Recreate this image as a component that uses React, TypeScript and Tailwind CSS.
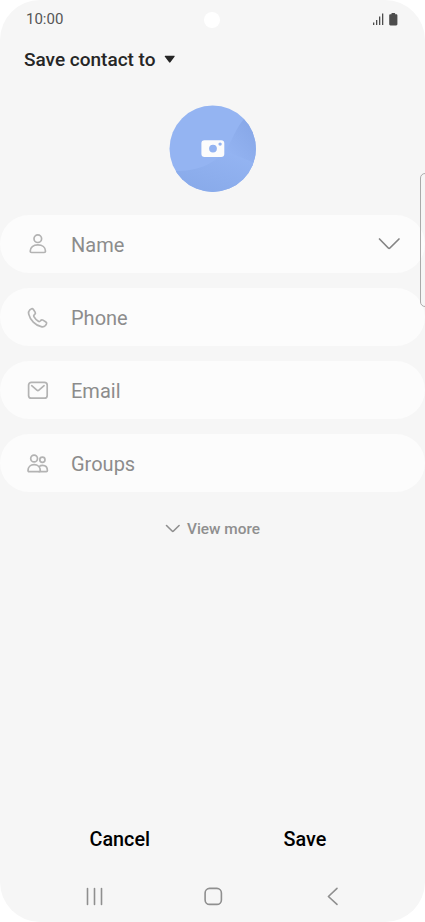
import type { ReactNode } from "react";

const stroke = { fill: "none", stroke: "#b3b3b3", strokeWidth: 1.7, strokeLinecap: "round", strokeLinejoin: "round" } as const;

function PersonIcon() {
  return (
    <svg className="mt-px" width="24" height="24" viewBox="0 0 24 24" {...stroke}>
      <circle cx="11.8" cy="6.7" r="3.8" />
      <path d="M4.200 19.200c0-3.900 3.100-6.300 7.600-6.300s7.700 2.400 7.700 6.300c0 .9-.5 1.300-1.400 1.300H5.600c-.9 0-1.400-.4-1.400-1.300z" />
    </svg>
  );
}

function PhoneIcon() {
  return (
    <svg className="mt-[2px]" width="24" height="24" viewBox="0 0 24 24" {...stroke}>
      <path d="M3.700 4 5 3.100c.9-.6 1.800-.4 2.400.4l1.700 2.600c.5.800.4 1.600-.3 2.200l-.6.500c-.6.600-.7 1.200-.3 1.900 1.100 2 2.500 3.400 4.500 4.600.7.400 1.300.3 1.900-.3l.5-.6c.6-.7 1.400-.8 2.200-.3l2.900 1.900c.8.600 1 1.400.4 2.300l-.9 1.200c-1.100 1.300-2.500 1.600-4.200 1.200C9.300 19.300 4.200 14.100 2.700 8.100c-.4-1.600-.1-3 1-4.100z" />
    </svg>
  );
}

function MailIcon() {
  return (
    <svg width="24" height="24" viewBox="0 0 24 24" {...stroke}>
      <rect x="2.600" y="4.300" width="18.600" height="15.900" rx="2.800" />
      <path d="m5.700 7.700 5.200 4.500c.7.600 1.300.6 2 0l5.200-4.500" />
    </svg>
  );
}

function GroupIcon() {
  return (
    <svg className="mt-[2px]" width="24" height="24" viewBox="0 0 24 24" {...stroke}>
      <circle cx="8.100" cy="6.500" r="3.400" />
      <circle cx="16.400" cy="7.700" r="2.600" />
      <path d="M2 18.600c0-3.600 2.500-5.900 6.100-5.900s6.200 2.300 6.200 5.900c0 .7-.4 1.100-1.100 1.100H3.100c-.7 0-1.100-.4-1.100-1.100z" />
      <path d="M13.300 14.500c.8-.8 1.900-1.200 3.300-1.200 2.900 0 4.800 1.900 4.800 5.200 0 .8-.4 1.200-1.100 1.200h-7" />
    </svg>
  );
}

function Field({ icon, label, children }: { icon: ReactNode; label: string; children?: ReactNode }) {
  return (
    <div className="flex h-[57.500px] items-center rounded-[29px] bg-[#fcfcfc] pr-[24px] pl-[26px]">
      {icon}
      <span className="ml-[21px] flex-1 pt-[2px] text-[20px] leading-6 text-[#8c8c8c]">{label}</span>
      {children}
    </div>
  );
}

export default function App() {
  return (
    <div className="h-[922px] w-[425px] overflow-hidden bg-white font-['Roboto',sans-serif]">
      <div className="relative flex h-full flex-col overflow-hidden rounded-[40px] bg-[#f6f6f6]">
        <header className="flex h-[38px] shrink-0 items-center justify-between pr-[26px] pl-[26px]">
          <span className="text-[15px] leading-5 text-[#555555]">10:00</span>
          <svg width="27" height="14" viewBox="0 0 27 14" fill="#4d4d4d">
            <path d="M1 10.500h1.300V13H1zM4 8h1.300v5H4zM7 4.500h1.300V13H7zM10 1.500h1.300V13H10z" />
            <path d="M19.400 1.700c0-.4.300-.6.600-.6h2.600c.4 0 .6.200.6.600v.5h.9c.9 0 1.300.5 1.300 1.300v8.600c0 .8-.4 1.300-1.300 1.300h-5.600c-.9 0-1.300-.5-1.300-1.300V3.500c0-.8.4-1.300 1.300-1.300h.9z" />
          </svg>
        </header>
        <div className="absolute top-[12px] left-[204px] size-4 rounded-full bg-white" />

        <div className="mt-px flex h-[42px] shrink-0 items-center pl-[24px]">
          <span className="text-[19px] leading-6 font-medium text-[#262626]">Save contact to</span>
          <svg className="ml-[8px]" width="12" height="10" viewBox="0 0 12 10" fill="#262626">
            <path d="M1.500.700h8.400c.8 0 1 .6.600 1.100L6.400 7.300c-.4.500-.9.500-1.300 0L.9 1.800C.5 1.300.8.700 1.500.700z" />
          </svg>
        </div>

        <div className="mt-[24px] flex shrink-0 justify-center">
          <svg width="88" height="88" viewBox="0 0 88 88">
            <defs>
              <clipPath id="avatar"><circle cx="43.700" cy="43.700" r="43.200" /></clipPath>
              <linearGradient id="right" x1="1" y1="0" x2=".3" y2="1">
                <stop offset="0" stopColor="#83a3e4" />
                <stop offset="1" stopColor="#94b4f2" />
              </linearGradient>
              <linearGradient id="bottom" x1="0" y1="1" x2=".7" y2="0">
                <stop offset="0" stopColor="#86a8e8" />
                <stop offset="1" stopColor="#94b4f2" />
              </linearGradient>
            </defs>
            <g clipPath="url(#avatar)">
              <rect width="88" height="88" fill="#94b4f2" />
              <path d="M0 66c24 1 43-4 56-21l32 12v31H0z" fill="url(#bottom)" />
              <path d="M88 4C71 13 67 27 60 40l-4 6 32 13z" fill="url(#right)" />
            </g>
            <path fillRule="evenodd" clipRule="evenodd" fill="#fcfcfc" d="M35.500 35.200h16.700c2 0 3.100 1.100 3.100 3v10.700c0 2-1.100 3-3.100 3H35.500c-2 0-3.100-1-3.100-3V38.200c0-1.900 1.100-3 3.100-3zM44 39.700a3.900 3.900 0 1 0 0 7.800 3.900 3.900 0 0 0 0-7.800zm7.100-2.300a1.700 1.700 0 1 0 0 3.400 1.700 1.700 0 0 0 0-3.400z" />
          </svg>
        </div>

        <main className="mt-[22px] flex shrink-0 flex-col gap-[15.500px]">
          <Field icon={<PersonIcon />} label="Name">
            <svg width="24" height="14" viewBox="0 0 24 14" fill="none" stroke="#858585" strokeWidth="1.700" strokeLinecap="round" strokeLinejoin="round">
              <path d="m2.500 2 8.800 9c.6.600 1 .600 1.600 0L22 2" />
            </svg>
          </Field>
          <Field icon={<PhoneIcon />} label="Phone" />
          <Field icon={<MailIcon />} label="Email" />
          <Field icon={<GroupIcon />} label="Groups" />
        </main>

        <div className="mt-[25px] flex items-center justify-center">
          <svg className="mr-[6px]" width="16" height="10" viewBox="0 0 16 10" fill="none" stroke="#8f8f8f" strokeWidth="1.600" strokeLinecap="round" strokeLinejoin="round">
            <path d="m1.500 1.500 5.600 5.500c.5.500.9.5 1.400 0l5.600-5.500" />
          </svg>
          <span className="text-[15.400px] leading-6 font-medium text-[#8f8f8f]">View more</span>
        </div>

        <footer className="mt-auto shrink-0">
          <div className="flex h-[30px] items-center pt-[2px] text-[19.800px] leading-6 font-medium text-black">
            <span className="ml-[89.500px] w-[194px]">Cancel</span>
            <span>Save</span>
          </div>
          <nav className="mt-[32px] flex h-[20px] items-center justify-between pr-[85px] pl-[85px]">
            <svg width="20" height="20" viewBox="0 0 20 20" fill="none" stroke="#8f8f8f" strokeWidth="1.600" strokeLinecap="round">
              <path d="M2.500 2.500v16M9.500 2.500v16M16.500 2.500v16" />
            </svg>
            <svg width="20" height="20" viewBox="0 0 20 20" fill="none" stroke="#8f8f8f" strokeWidth="1.600">
              <rect x="2.100" y="2.400" width="16.300" height="16" rx="4.500" />
            </svg>
            <svg width="20" height="20" viewBox="0 0 20 20" fill="none" stroke="#8f8f8f" strokeWidth="1.600" strokeLinecap="round" strokeLinejoin="round">
              <path d="m17 2.300-8.600 8.200 8.600 7.900" />
            </svg>
          </nav>
          <div className="h-[16px]" />
        </footer>
        <div className="absolute top-[173px] -right-[6px] h-[134px] w-[11px] rounded-[5px] border border-[#aaaaaa]" />
      </div>
    </div>
  );
}
